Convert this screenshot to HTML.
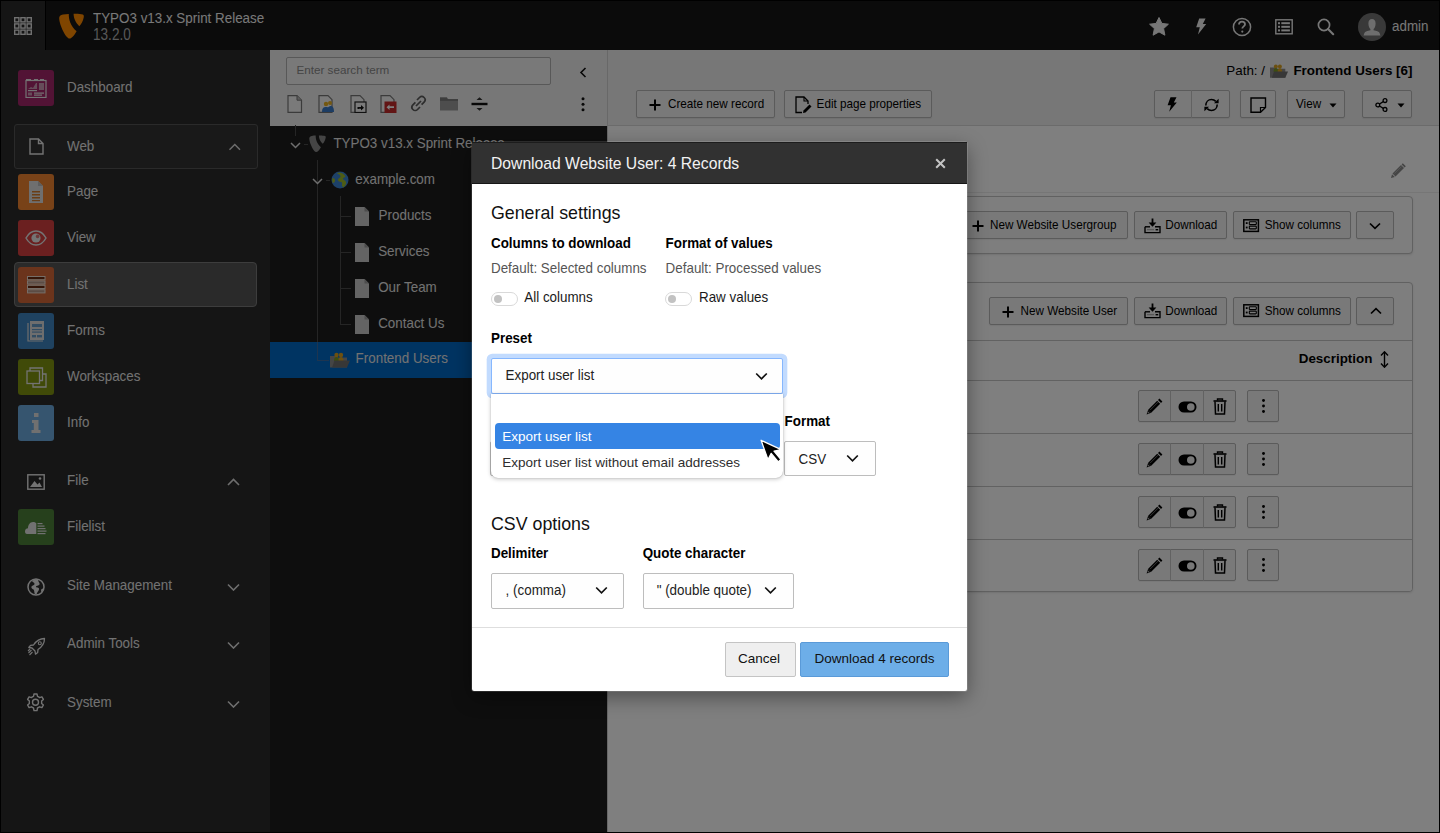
<!DOCTYPE html>
<html><head><meta charset="utf-8">
<style>
*{box-sizing:border-box;margin:0;padding:0}
html,body{width:1440px;height:833px;overflow:hidden;background:#000;font-family:"Liberation Sans",sans-serif;font-size:13.4px}
.a{position:absolute}
svg{display:block}
#page{position:absolute;left:0;top:0;width:1440px;height:833px;overflow:hidden;background:#000}
/* topbar */
#top{left:1px;top:1px;width:1438px;height:49px;background:#161616}
#grid{left:0;top:0;width:45px;height:49px;background:#2a2a2a;border-right:1px solid #000}
.tt{color:#f2f2f2;font-size:13.4px;line-height:15px;white-space:nowrap}
/* sidebar */
#side{left:1px;top:50px;width:269px;height:782px;background:#2a2a2a}
.mi{position:absolute;left:17px;height:36px;width:36px;border-radius:3px}
.ml{position:absolute;left:66px;color:#e4e4e4;font-size:13.4px;line-height:16px;white-space:nowrap}
.chev{position:absolute;left:226px}
/* tree */
#tree{left:270px;top:50px;width:337px;height:782px;background:#1d1d1d}
#ttool{left:0;top:0;width:337px;height:75.5px;background:#eeeeee}
.tl{position:absolute;color:#e4e4e4;font-size:13.4px;line-height:16px;white-space:nowrap}
.vl{position:absolute;width:1px;background:#4a4a4a}
.hl{position:absolute;height:1px;background:#4a4a4a}
/* content */
#content{left:607px;top:50px;width:832px;height:782px;background:#fefefe}
#dochead{left:0;top:0;width:832px;height:76px;background:#eeeeee;border-bottom:1px solid #d6d6d6}
.btn{position:absolute;height:28px;border:1px solid #b6b6b6;background:#f3f3f3;box-shadow:0 1px 1px rgba(0,0,0,.06);border-radius:2px;color:#000;font-size:11.7px;line-height:26px;white-space:nowrap}
.btn svg{position:absolute}
.btn span{position:absolute;top:0}
.panel{position:absolute;border:1px solid #c2c2c2;border-radius:4px;background:#fcfcfc;box-shadow:0 1px 2px rgba(0,0,0,.1)}
#overlay{left:0;top:0;width:1440px;height:833px;background:rgba(0,0,0,.5)}
/* modal */
#modal{left:472px;top:142px;width:495px;height:549px;background:#fff;outline:1px solid rgba(255,255,255,.13);border-radius:2px;box-shadow:0 6px 20px rgba(0,0,0,.4)}
#mh{left:0;top:0;width:495px;height:42px;background:#313131;color:#fff}
.lbl{position:absolute;font-weight:bold;font-size:13.4px;line-height:16px;color:#000;white-space:nowrap}
.txt{position:absolute;font-size:13.4px;line-height:16px;color:#555;white-space:nowrap}
.sel{position:absolute;border:1px solid #bdbdbd;border-radius:2px;background:#fefefe;color:#222;font-size:13.4px;white-space:nowrap}
.sel span{position:absolute}
.sel svg{position:absolute}
.tog{position:absolute;width:27px;height:14px;border:1px solid #d9d9d9;border-radius:7px;background:#fff}
.tog:after{content:"";position:absolute;left:2px;top:2px;width:8px;height:8px;border-radius:50%;background:#c2c2c2}
.ml,.tl,.lbl,.txt{transform:scaleY(1.09);transform-origin:0 12.6px}
.tt{transform:scaleY(1.16);transform-origin:0 12.1px}
.btn span{transform:scaleY(1.1);transform-origin:0 17.5px}
.sel span{transform:scaleY(1.08);transform-origin:0 12.6px}
</style></head>
<body>
<div id="page">
<div id="top" class="a">
  <div id="grid" class="a">
    <svg class="a" style="left:13px;top:16px" width="18" height="18" viewBox="0 0 18 18">
      <g fill="none" stroke="#e0e0e0" stroke-width="1.4">
        <rect x="0.7" y="0.7" width="4.2" height="4.2"/><rect x="6.9" y="0.7" width="4.2" height="4.2"/><rect x="13.1" y="0.7" width="4.2" height="4.2"/>
        <rect x="0.7" y="6.9" width="4.2" height="4.2"/><rect x="6.9" y="6.9" width="4.2" height="4.2"/><rect x="13.1" y="6.9" width="4.2" height="4.2"/>
        <rect x="0.7" y="13.1" width="4.2" height="4.2"/><rect x="6.9" y="13.1" width="4.2" height="4.2"/><rect x="13.1" y="13.1" width="4.2" height="4.2"/>
      </g>
    </svg>
  </div>
  <svg class="a" style="left:57px;top:12px" width="27" height="27" viewBox="0 0 27 27">
    <path fill="#ff8a00" d="M1.2,5.5 C1,3.2 2.5,1.8 5,1.4 C7,1.1 9,0.9 10.8,0.9 C10.6,6 12.3,12.5 18.6,18.3 C16.2,22.5 13.6,25.5 11.6,25.6 C8.2,25.8 1.6,12.8 1.2,5.5 Z"/>
    <path fill="#ff8a00" d="M15.6,0.8 C18.5,0.6 22.5,0.8 24.8,1.6 C25.9,2 26.1,3.2 25.6,5 C25,8 23.3,11.5 21.3,13.2 C17.8,10 15.5,5 15.6,0.8 Z"/>
  </svg>
  <div class="a tt" style="left:92px;top:10px">TYPO3 v13.x Sprint Release</div>
  <div class="a tt" style="left:92px;top:26.5px;color:#b0b0b0;font-size:13.6px">13.2.0</div>
  <!-- right icons -->
  <svg class="a" style="left:1148px;top:15.5px" width="20" height="19" viewBox="0 0 20 19"><path fill="#eeeeee" d="M10,0.5 L12.9,6.4 L19.4,7.2 L14.6,11.6 L15.9,18.2 L10,14.9 L4.1,18.2 L5.4,11.6 L0.6,7.2 L7.1,6.4 Z" stroke="#eeeeee" stroke-width="1" stroke-linejoin="round"/></svg>
  <svg class="a" style="left:1194px;top:17px" width="12" height="17" viewBox="0 0 12 17"><path fill="#eeeeee" d="M4.2,0.5 L10.6,0.5 L7.8,6 L11.2,6 L3,16.6 L4.8,9.2 L1.2,9.2 Z"/></svg>
  <svg class="a" style="left:1231px;top:15.5px" width="20" height="20" viewBox="0 0 20 20"><circle cx="10" cy="10" r="8.6" fill="none" stroke="#eeeeee" stroke-width="1.5"/><path d="M7,7.6 C7,5.6 8.4,4.6 10,4.6 C11.7,4.6 13,5.7 13,7.2 C13,9.3 10.3,9.4 10.3,11.6" fill="none" stroke="#eeeeee" stroke-width="1.8"/><circle cx="10.3" cy="14.6" r="1.1" fill="#eeeeee"/></svg>
  <svg class="a" style="left:1274px;top:17.5px" width="18" height="16" viewBox="0 0 18 16"><rect x="0.8" y="0.8" width="16.4" height="14" fill="none" stroke="#eeeeee" stroke-width="1.4"/><g fill="#eeeeee"><rect x="3" y="3.2" width="2" height="2"/><rect x="3" y="6.8" width="2" height="2"/><rect x="3" y="10.4" width="2" height="2"/><rect x="6.3" y="3.2" width="8.6" height="2"/><rect x="6.3" y="6.8" width="8.6" height="2"/><rect x="6.3" y="10.4" width="8.6" height="2"/></g></svg>
  <svg class="a" style="left:1316px;top:16.5px" width="18" height="18" viewBox="0 0 18 18"><circle cx="7" cy="7" r="5.6" fill="none" stroke="#eeeeee" stroke-width="1.7"/><path d="M11,11 L16.2,16.2" stroke="#eeeeee" stroke-width="2.1" stroke-linecap="round"/></svg>
  <div class="a" style="left:1356.5px;top:11.5px;width:28px;height:28px;border-radius:50%;background:#737373;overflow:hidden">
    <svg class="a" style="left:0;top:0" width="28" height="28" viewBox="0 0 28 28"><path fill="#dcdcdc" d="M14,6 C16.3,6 17.6,7.8 17.6,10.4 C17.6,13 16.6,15 15.6,16 L15.6,17.3 C18.3,17.8 21,18.6 21.6,20 L22.4,22.6 L5.6,22.6 L6.4,20 C7,18.6 9.7,17.8 12.4,17.3 L12.4,16 C11.4,15 10.4,13 10.4,10.4 C10.4,7.8 11.7,6 14,6 Z"/></svg>
  </div>
  <div class="a tt" style="left:1391px;top:18px;color:#eeeeee">admin</div>
</div>
<div id="side" class="a">
  <!-- Dashboard -->
  <div class="mi" style="top:20px;background:#a4266a">
    <svg class="a" style="left:7px;top:8px" width="22" height="20" viewBox="0 0 22 20"><g fill="none" stroke="#e8e8e8" stroke-width="1.2"><rect x="1" y="2.5" width="20" height="17"/></g><g fill="#e8e8e8"><rect x="1" y="1" width="5" height="1.2"/><rect x="9" y="1" width="4" height="1.2"/><rect x="15" y="1" width="4" height="1.2"/><rect x="3" y="12" width="9" height="1.2"/><path d="M3,11 L6,9 L8,10 L11,5 L12,5 L12,11 Z" opacity=".6"/><rect x="14" y="5" width="5" height="7" opacity=".6"/><rect x="3" y="14.5" width="4" height="3" opacity=".6"/><rect x="9" y="14.5" width="10" height="1.2"/><rect x="9" y="16.5" width="8" height="1.2"/></g></svg>
  </div>
  <div class="ml" style="top:29.9px">Dashboard</div>
  <!-- Web group -->
  <div class="a" style="left:13px;top:74px;width:243.5px;height:45px;border:1.2px solid #545454;border-radius:3px;background:#333333"></div>
  <svg class="a" style="left:28px;top:87.5px" width="15" height="17" viewBox="0 0 15 17"><path d="M1,1 L9.5,1 L14,5.5 L14,16 L1,16 Z M9.5,1 L9.5,5.5 L14,5.5" fill="none" stroke="#e6e6e6" stroke-width="1.4" stroke-linejoin="miter"/></svg>
  <div class="ml" style="top:88.8px">Web</div>
  <svg class="chev" style="top:93px;left:227px" width="13" height="8" viewBox="0 0 13 8"><path d="M1.5,6.8 L6.8,1.5 L12,6.8" fill="none" stroke="#dddddd" stroke-width="1.4"/></svg>
  <!-- Page -->
  <div class="mi" style="top:124.2px;background:#f08430">
    <svg class="a" style="left:11px;top:7px" width="14" height="22" viewBox="0 0 14 22"><path d="M0,0 L9,0 L14,5 L14,22 L0,22 Z" fill="#dedede"/><path d="M9,0 L9,5 L14,5 Z" fill="#bdbdbd"/><g fill="#d47a2a"><rect x="3" y="10" width="8" height="1.5"/><rect x="3" y="13" width="8" height="1.5"/><rect x="3" y="16" width="8" height="1.5"/><rect x="3" y="19" width="8" height="1.2"/></g></svg>
  </div>
  <div class="ml" style="top:134.1px">Page</div>
  <!-- View -->
  <div class="mi" style="top:170.4px;background:#d64040">
    <svg class="a" style="left:7px;top:10px" width="22" height="16" viewBox="0 0 22 16"><path d="M1,8 C4,2.5 8,1 11,1 C14,1 18,2.5 21,8 C18,13.5 14,15 11,15 C8,15 4,13.5 1,8 Z" fill="none" stroke="#e8e8e8" stroke-width="1.5"/><circle cx="11" cy="8" r="4.6" fill="#e8e8e8"/><circle cx="12.6" cy="6.4" r="1.8" fill="#d64040" opacity=".7"/></svg>
  </div>
  <div class="ml" style="top:180.3px">View</div>
  <!-- List (active) -->
  <div class="a" style="left:12.8px;top:212px;width:243.5px;height:45px;border:1.2px solid #7a7a7a;border-radius:4px;background:#545454"></div>
  <div class="mi" style="top:216.6px;background:#d66838">
    <svg class="a" style="left:9px;top:9.5px" width="19" height="18" viewBox="0 0 19 18"><g stroke="#ecdcd0" stroke-width="1"><rect x="0.5" y="0.5" width="17.5" height="3.2" fill="#6a2a10"/><rect x="0.5" y="4.9" width="17.5" height="3.2" fill="#b89888"/><rect x="0.5" y="9.3" width="17.5" height="3.2" fill="#6a2a10"/><rect x="0.5" y="13.7" width="17.5" height="3.2" fill="#b89888"/></g></svg>
  </div>
  <div class="ml" style="top:226.5px">List</div>
  <!-- Forms -->
  <div class="mi" style="top:262.8px;background:#3e84c0">
    <svg class="a" style="left:7px;top:7px" width="22" height="22" viewBox="0 0 22 22"><path d="M3,3 L3,21 L18,21" fill="none" stroke="#dcdcdc" stroke-width="1.2"/><rect x="5" y="1" width="14" height="19" fill="#dcdcdc"/><g fill="#3e84c0" opacity=".75"><rect x="7" y="4" width="10" height="3"/><rect x="7" y="9" width="10" height="1.2"/><rect x="7" y="11.5" width="10" height="1.2"/><rect x="7" y="15" width="4" height="2.4"/><rect x="12" y="15" width="5" height="2.4"/></g></svg>
  </div>
  <div class="ml" style="top:272.7px">Forms</div>
  <!-- Workspaces -->
  <div class="mi" style="top:309px;background:#809410">
    <svg class="a" style="left:8px;top:8px" width="21" height="21" viewBox="0 0 21 21"><g fill="none" stroke="#e6e6e6" stroke-width="1.3"><rect x="1" y="4" width="12.5" height="12.5"/><path d="M4,4 L4,1 L16.5,1 L16.5,13.5 L13.5,13.5"/><path d="M7,16.5 L7,20 L20,20 L20,7 L16.5,7"/></g></svg>
  </div>
  <div class="ml" style="top:318.9px">Workspaces</div>
  <!-- Info -->
  <div class="mi" style="top:355.2px;background:#6caade">
    <svg class="a" style="left:12px;top:7px" width="12" height="22" viewBox="0 0 12 22"><g fill="#e0e0e0"><rect x="4" y="1" width="4.5" height="4"/><path d="M2,8 L8.5,8 L8.5,18 L10.5,18 L10.5,21 L1.5,21 L1.5,18 L3.8,18 L3.8,11 L2,11 Z"/></g></svg>
  </div>
  <div class="ml" style="top:365.1px">Info</div>
  <!-- File group -->
  <svg class="a" style="left:26px;top:424px" width="18" height="16" viewBox="0 0 18 16"><rect x="0.8" y="0.8" width="16.4" height="14.4" fill="none" stroke="#e6e6e6" stroke-width="1.4"/><path d="M3,13 L7.5,7 L10.5,10.5 L12.5,8.5 L15,13 Z" fill="#e6e6e6"/><circle cx="13" cy="4.5" r="1.3" fill="#e6e6e6"/></svg>
  <div class="ml" style="top:423.4px">File</div>
  <svg class="chev" style="top:428px" width="13" height="8" viewBox="0 0 13 8"><path d="M1,7 L6.5,1.5 L12,7" fill="none" stroke="#dddddd" stroke-width="1.6"/></svg>
  <!-- Filelist -->
  <div class="mi" style="top:459.4px;background:#4c8038">
    <svg class="a" style="left:7px;top:10px" width="22" height="16" viewBox="0 0 22 16"><path d="M2,15 C0.5,15 0,13.5 0,12.5 C0,10.5 1.5,9.3 3,9.3 C3,6 5,3 8,3 C9.3,3 10.5,3.5 11.3,4.2 L11.3,15 Z" fill="#e2e2e2"/><path d="M11.3,4.2 C9.5,2 8,1 8,1" fill="none"/><g fill="#e2e2e2"><rect x="12.5" y="4" width="5" height="1.2"/><rect x="12.5" y="6.5" width="7" height="1.2"/><rect x="12.5" y="9" width="8" height="1.2"/><rect x="12.5" y="11.5" width="9" height="1.2"/><rect x="12.5" y="14" width="8" height="1.2"/></g></svg>
  </div>
  <div class="ml" style="top:469.3px">Filelist</div>
  <!-- Site Management -->
  <svg class="a" style="left:25.6px;top:527.5px" width="18" height="18" viewBox="0 0 18 18"><circle cx="9" cy="9" r="8" fill="none" stroke="#e6e6e6" stroke-width="1.5"/><path d="M5,3 C6,4.5 7.5,4.5 7.5,6 C7.5,7.5 5.5,7 4.5,8.5 C3.8,9.6 5.2,11 6.5,11.5 C7.5,12 7,14 7.8,16 L9.5,16.5 C10,14.5 11.5,13 12,11.5 C12.5,10 11,9.5 10,9.5 C9,9.5 8.5,8.5 9.5,8 C10.5,7.5 12,7.5 12.5,6.5 C13,5.5 12,4.5 11.5,3.5 L11,1.3 C9,1 6.5,1.5 5,3 Z M14,12 C14.5,11 15.5,10.5 16.5,10.5 C16.2,12 15.5,13.5 14.5,14.5 Z" fill="#e6e6e6"/></svg>
  <div class="ml" style="top:528.4px">Site Management</div>
  <svg class="chev" style="top:533px" width="13" height="8" viewBox="0 0 13 8"><path d="M1,1.5 L6.5,7 L12,1.5" fill="none" stroke="#dddddd" stroke-width="1.6"/></svg>
  <!-- Admin Tools -->
  <svg class="a" style="left:25.6px;top:586.5px" width="19" height="19" viewBox="0 0 19 19"><path d="M17.5,1.5 C13,1.5 9.5,3.5 6.5,8 L3.5,8.3 L1.8,10.5 L5,11 L8,14 L8.5,17.2 L10.7,15.5 L11,12.5 C15.5,9.5 17.5,6 17.5,1.5 Z" fill="none" stroke="#e6e6e6" stroke-width="1.3" stroke-linejoin="round"/><circle cx="12.8" cy="6.2" r="1.5" fill="none" stroke="#e6e6e6" stroke-width="1.1"/><path d="M4.5,13 L1.5,16 M5.5,15 L2.5,18 M3,12 L1,14" stroke="#e6e6e6" stroke-width="1.1"/></svg>
  <div class="ml" style="top:586.4px">Admin Tools</div>
  <svg class="chev" style="top:591px" width="13" height="8" viewBox="0 0 13 8"><path d="M1,1.5 L6.5,7 L12,1.5" fill="none" stroke="#dddddd" stroke-width="1.6"/></svg>
  <!-- System -->
  <svg class="a" style="left:25.1px;top:643px" width="19" height="19" viewBox="0 0 19 19"><path d="M8,1 L11,1 L11.5,3.4 C12.3,3.7 13,4.1 13.6,4.6 L15.9,3.8 L17.4,6.4 L15.6,8 C15.7,8.8 15.7,9.6 15.6,10.4 L17.4,12 L15.9,14.6 L13.6,13.8 C13,14.3 12.3,14.7 11.5,15 L11,17.6 L8,17.6 L7.5,15 C6.7,14.7 6,14.3 5.4,13.8 L3.1,14.6 L1.6,12 L3.4,10.4 C3.3,9.6 3.3,8.8 3.4,8 L1.6,6.4 L3.1,3.8 L5.4,4.6 C6,4.1 6.7,3.7 7.5,3.4 Z" fill="none" stroke="#e6e6e6" stroke-width="1.4" stroke-linejoin="round"/><circle cx="9.5" cy="9.3" r="3" fill="none" stroke="#e6e6e6" stroke-width="1.4"/></svg>
  <div class="ml" style="top:645.4px">System</div>
  <svg class="chev" style="top:650px" width="13" height="8" viewBox="0 0 13 8"><path d="M1,1.5 L6.5,7 L12,1.5" fill="none" stroke="#dddddd" stroke-width="1.6"/></svg>
</div>
<div id="tree" class="a">
  <div id="ttool" class="a">
    <div class="a" style="left:16px;top:6.5px;width:265px;height:28.5px;border:1px solid #b0b0b0;border-radius:2px;background:#f2f2f2"></div>
    <div class="a" style="left:26.4px;top:13px;font-size:11.7px;line-height:14px;color:#8a8a8a;white-space:nowrap">Enter search term</div>
    <svg class="a" style="left:308.5px;top:17px" width="8" height="11" viewBox="0 0 8 11"><path d="M6.5,1 L2,5.5 L6.5,10" fill="none" stroke="#111" stroke-width="1.6"/></svg>
    <!-- icons -->
    <svg class="a" style="left:17px;top:45px" width="16" height="18" viewBox="0 0 16 18"><path d="M1,0.7 L10,0.7 L14.5,5.2 L14.5,17.3 L1,17.3 Z" fill="#f4f4f4" stroke="#777" stroke-width="1.2"/><path d="M10,0.7 L10,5.2 L14.5,5.2" fill="#bbb" stroke="#777" stroke-width="1"/></svg>
    <svg class="a" style="left:48px;top:45px" width="17" height="18" viewBox="0 0 17 18"><path d="M1,0.7 L10,0.7 L14,4.7 L14,17.3 L1,17.3 Z" fill="#f4f4f4" stroke="#777" stroke-width="1.2"/><circle cx="8" cy="9" r="2.2" fill="#e8b020"/><circle cx="12" cy="8" r="2" fill="#e8b020"/><path d="M4,17 C4,13 5.5,12 8,12 C10.5,12 12,13 12,17 Z" fill="#3a7ac8"/><path d="M9,17 C9,13 10.5,11 12.5,11 C14.5,11 16,12.5 16,17 Z" fill="#3a7ac8"/></svg>
    <svg class="a" style="left:80px;top:45px" width="17" height="18" viewBox="0 0 17 18"><path d="M1,0.7 L10,0.7 L14,4.7 L14,17.3 L1,17.3 Z" fill="#f4f4f4" stroke="#777" stroke-width="1.2"/><rect x="5" y="7" width="11" height="10.5" fill="#f4f4f4" stroke="#222" stroke-width="1.2"/><path d="M7.5,14 L7.5,12 L11,12 L11,10 L14,12.8 L11,15.6 L11,13.8 L9,13.8 L9,14 Z" fill="#111"/></svg>
    <svg class="a" style="left:110px;top:45px" width="17" height="18" viewBox="0 0 17 18"><path d="M1,0.7 L10,0.7 L14,4.7 L14,17.3 L1,17.3 Z" fill="#f4f4f4" stroke="#777" stroke-width="1.2"/><rect x="4.5" y="6.5" width="12" height="11.5" fill="#c42a2a"/><path d="M6.5,12.2 L9.5,9.5 L9.5,11.3 L14,11.3 L14,13.1 L9.5,13.1 L9.5,14.9 Z" fill="#fff"/></svg>
    <svg class="a" style="left:140px;top:45px" width="17" height="17" viewBox="0 0 17 17"><g fill="none" stroke="#5a5a5a" stroke-width="1.7"><path d="M7,5 L9.5,2.5 C10.8,1.2 12.8,1.2 14.1,2.5 C15.4,3.8 15.4,5.8 14.1,7.1 L11.6,9.6"/><path d="M10,12 L7.5,14.5 C6.2,15.8 4.2,15.8 2.9,14.5 C1.6,13.2 1.6,11.2 2.9,9.9 L5.4,7.4"/><path d="M6,11 L11,6"/></g></svg>
    <svg class="a" style="left:170px;top:46.5px" width="18" height="14" viewBox="0 0 18 14"><path d="M0,0.5 L7,0.5 L8.5,2.3 L18,2.3 L18,13.5 L0,13.5 Z" fill="#9a9a9a"/><rect x="0" y="2.3" width="18" height="1.3" fill="#6a6a6a"/><rect x="0" y="0.5" width="7" height="2" fill="#7a7a7a"/></svg>
    <svg class="a" style="left:201px;top:47px" width="17" height="14" viewBox="0 0 17 14"><path d="M5.5,3 L8.5,0.2 L11.5,3 Z M5.5,11 L8.5,13.8 L11.5,11 Z" fill="#333"/><rect x="0.5" y="5.8" width="16" height="2.4" fill="#111"/></svg>
    <svg class="a" style="left:310.8px;top:46.8px" width="4" height="15" viewBox="0 0 4 15"><circle cx="2" cy="1.8" r="1.5" fill="#111"/><circle cx="2" cy="7.3" r="1.5" fill="#111"/><circle cx="2" cy="12.8" r="1.5" fill="#111"/></svg>
  </div>
  <div class="a" style="left:336.5px;top:0;width:1px;height:782px;background:#8a8a8a"></div>
  <!-- tree lines -->
  <div class="vl" style="left:25px;top:75px;height:11px"></div>
  <div class="hl" style="left:34px;top:94px;width:4px"></div>
  <div class="vl" style="left:47px;top:110px;height:201px"></div>
  <div class="hl" style="left:56px;top:130px;width:4px"></div>
  <div class="vl" style="left:70px;top:146px;height:129px"></div>
  <div class="hl" style="left:70px;top:166px;width:11px"></div>
  <div class="hl" style="left:70px;top:202px;width:11px"></div>
  <div class="hl" style="left:70px;top:238px;width:11px"></div>
  <div class="hl" style="left:70px;top:274px;width:11px"></div>
  <!-- highlight -->
  <div class="a" style="left:0;top:291.6px;width:336.5px;height:36px;background:#0068c4"></div>
  <div class="hl" style="left:47px;top:310px;width:12px;background:#3d6aa0"></div>
  <div class="vl" style="left:47px;top:291.6px;height:19px;background:#3d6aa0"></div>
  <!-- row 1 -->
  <svg class="a" style="left:19.5px;top:91.5px" width="11" height="7" viewBox="0 0 11 7"><path d="M1,1 L5.5,5.5 L10,1" fill="none" stroke="#dddddd" stroke-width="1.5"/></svg>
  <svg class="a" style="left:38px;top:85px" width="19" height="18" viewBox="0 0 27 27">
    <path fill="#8a8a8a" d="M1.2,5.5 C1,3.2 2.5,1.8 5,1.4 C7,1.1 9,0.9 10.8,0.9 C10.6,6 12.3,12.5 18.6,18.3 C16.2,22.5 13.6,25.5 11.6,25.6 C8.2,25.8 1.6,12.8 1.2,5.5 Z"/>
    <path fill="#8a8a8a" d="M15.6,0.8 C18.5,0.6 22.5,0.8 24.8,1.6 C25.9,2 26.1,3.2 25.6,5 C25,8 23.3,11.5 21.3,13.2 C17.8,10 15.5,5 15.6,0.8 Z"/>
  </svg>
  <div class="tl" style="left:63.4px;top:86px">TYPO3 v13.x Sprint Release</div>
  <!-- row 2 -->
  <svg class="a" style="left:41.5px;top:127.5px" width="11" height="7" viewBox="0 0 11 7"><path d="M1,1 L5.5,5.5 L10,1" fill="none" stroke="#dddddd" stroke-width="1.5"/></svg>
  <svg class="a" style="left:61px;top:121px" width="18" height="18" viewBox="0 0 18 18"><circle cx="9" cy="9" r="8.5" fill="#3b82d0"/><path d="M6,2.2 C7.5,3.5 9,3.5 9.5,5 C10,6.5 7.5,7 7,8.5 C6.5,10 8.5,11 10,11 C11.5,11 11,13 11,15 L12.5,16.5 C14.5,14.5 15.5,12.5 15,11 C14.5,9.5 12.5,9 12,8 C11.5,7 13.5,6.5 14.5,5.5 C13,3 10.5,1.5 8,1.5 Z M1.5,7 C3,7 4.5,8 4,10 C3.5,11.5 2.5,12 1.8,12 C1,10.5 1,8.5 1.5,7 Z" fill="#9ab82a"/></svg>
  <div class="tl" style="left:85.3px;top:122.2px">example.com</div>
  <!-- pages -->
  <svg class="a" style="left:85px;top:156.5px" width="14" height="19" viewBox="0 0 14 19"><path d="M0,0 L9.5,0 L14,4.5 L14,19 L0,19 Z" fill="#c8c8c8"/><path d="M9.5,0 L9.5,4.5 L14,4.5 Z" fill="#9a9a9a"/></svg>
  <div class="tl" style="left:108.6px;top:157.9px">Products</div>
  <svg class="a" style="left:85px;top:192.5px" width="14" height="19" viewBox="0 0 14 19"><path d="M0,0 L9.5,0 L14,4.5 L14,19 L0,19 Z" fill="#c8c8c8"/><path d="M9.5,0 L9.5,4.5 L14,4.5 Z" fill="#9a9a9a"/></svg>
  <div class="tl" style="left:108.2px;top:193.9px">Services</div>
  <svg class="a" style="left:85px;top:228.5px" width="14" height="19" viewBox="0 0 14 19"><path d="M0,0 L9.5,0 L14,4.5 L14,19 L0,19 Z" fill="#c8c8c8"/><path d="M9.5,0 L9.5,4.5 L14,4.5 Z" fill="#9a9a9a"/></svg>
  <div class="tl" style="left:108.2px;top:229.9px">Our Team</div>
  <svg class="a" style="left:85px;top:264.5px" width="14" height="19" viewBox="0 0 14 19"><path d="M0,0 L9.5,0 L14,4.5 L14,19 L0,19 Z" fill="#c8c8c8"/><path d="M9.5,0 L9.5,4.5 L14,4.5 Z" fill="#9a9a9a"/></svg>
  <div class="tl" style="left:108.2px;top:265.9px">Contact Us</div>
  <!-- Frontend Users -->
  <svg class="a" style="left:60px;top:301.5px" width="20" height="16" viewBox="0 0 20 16"><path d="M0,4 L7,4 L8,5.5 L17,5.5 L17,15.5 L0,15.5 Z" fill="#8a8a8a"/><circle cx="6.5" cy="3" r="2.2" fill="#d8a020"/><circle cx="11" cy="3" r="2.2" fill="#d8a020"/><path d="M4,9 C4,6 5,5 6.5,5 C8,5 9,6 9,9 Z" fill="#7a9a20"/><path d="M8.5,9 C8.5,6 9.5,5 11,5 C12.5,5 13.5,6 13.5,9 Z" fill="#d8a020"/><path d="M2,15.5 L4.5,8.5 L20,8.5 L17,15.5 Z" fill="#6e6e6e"/></svg>
  <div class="tl" style="left:85.6px;top:301.4px">Frontend Users</div>
</div>
<div id="content" class="a">
  <div id="dochead" class="a"></div>
  <div class="a" style="left:0;top:0;width:1px;height:782px;background:#d0d0d0"></div>
  <div class="btn" style="left:29px;top:40.4px;width:139px">
    <svg style="left:12px;top:8px" width="12" height="12" viewBox="0 0 12 12"><path d="M6,0.5 L6,11.5 M0.5,6 L11.5,6" stroke="#000" stroke-width="2"/></svg>
    <span style="left:31px">Create new record</span>
  </div>
  <div class="btn" style="left:177.3px;top:40.4px;width:148px">
    <svg style="left:10px;top:5px" width="17" height="18" viewBox="0 0 17 18"><path d="M7,16.5 L1,16.5 L1,1 L9,1 L13,5 L13,8" fill="none" stroke="#000" stroke-width="1.3"/><path d="M9,1 L9,5 L13,5" fill="none" stroke="#000" stroke-width="1.1"/><path d="M8,17 L8.5,14.5 L14.5,8.5 L16.5,10.5 L10.5,16.5 Z" fill="#000"/></svg>
    <span style="left:31.3px">Edit page properties</span>
  </div>
  <!-- right docheader buttons -->
  <div class="btn" style="left:547.2px;top:40.4px;width:75.4px"></div>
  <div class="a" style="left:584.2px;top:40.4px;width:1px;height:28px;background:#c4c4c4"></div>
  <svg class="a" style="left:560px;top:47px" width="10" height="15" viewBox="0 0 10 15"><path d="M3.5,0.3 L9.5,0.3 L6.8,5.4 L9.8,5.4 L2.2,14.8 L3.9,8.2 L0.6,8.2 Z" fill="#000"/></svg>
  <svg class="a" style="left:596px;top:46.5px" width="17" height="16" viewBox="0 0 17 16"><path d="M2.8,8.5 C2.8,5 5.3,2.5 8.5,2.5 C10.2,2.5 11.7,3.2 12.8,4.4" fill="none" stroke="#000" stroke-width="1.6"/><path d="M14.2,7.5 C14.2,11 11.7,13.5 8.5,13.5 C6.8,13.5 5.3,12.8 4.2,11.6" fill="none" stroke="#000" stroke-width="1.6"/><path d="M11,6.3 L15.6,6.3 L15.6,1.7 Z" fill="#000"/><path d="M6,9.7 L1.4,9.7 L1.4,14.3 Z" fill="#000"/></svg>
  <div class="btn" style="left:632.9px;top:40.4px;width:36.5px">
    <svg style="left:9px;top:5.5px" width="17" height="16" viewBox="0 0 17 16"><path d="M1,1 L15.5,1 L15.5,10.5 L10.5,15.2 L1,15.2 Z" fill="none" stroke="#000" stroke-width="1.4"/><path d="M15.5,10.5 L10.5,10.5 L10.5,15.2" fill="none" stroke="#000" stroke-width="1.2"/></svg>
  </div>
  <div class="btn" style="left:679.6px;top:40.4px;width:58px">
    <span style="left:8.4px">View</span>
    <svg style="left:41px;top:11.5px" width="8" height="5" viewBox="0 0 8 5"><path d="M0.5,0.5 L7.5,0.5 L4,4.5 Z" fill="#000"/></svg>
  </div>
  <div class="btn" style="left:754.7px;top:40.4px;width:50.7px">
    <svg style="left:12px;top:7px" width="13" height="14" viewBox="0 0 13 14"><g fill="none" stroke="#000" stroke-width="1.3"><circle cx="10" cy="2.6" r="1.9"/><circle cx="2.8" cy="7" r="1.9"/><circle cx="10" cy="11.4" r="1.9"/><path d="M4.5,6 L8.3,3.6 M4.5,8 L8.3,10.4"/></g></svg>
    <svg style="left:34px;top:11.5px" width="8" height="5" viewBox="0 0 8 5"><path d="M0.5,0.5 L7.5,0.5 L4,4.5 Z" fill="#000"/></svg>
  </div>
  <div class="a" style="left:619.3px;top:12.8px;font-size:13.4px;line-height:16px;color:#000;white-space:nowrap">Path: /</div>
  <svg class="a" style="left:663px;top:12.5px" width="18" height="16" viewBox="0 0 20 16"><path d="M0,4 L7,4 L8,5.5 L17,5.5 L17,15.5 L0,15.5 Z" fill="#8a8a8a"/><circle cx="6.5" cy="3" r="2.2" fill="#d8a020"/><circle cx="11" cy="3" r="2.2" fill="#d8a020"/><path d="M4,9 C4,6 5,5 6.5,5 C8,5 9,6 9,9 Z" fill="#7a9a20"/><path d="M8.5,9 C8.5,6 9.5,5 11,5 C12.5,5 13.5,6 13.5,9 Z" fill="#d8a020"/><path d="M2,15.5 L4.5,8.5 L20,8.5 L17,15.5 Z" fill="#6e6e6e"/></svg>
  <div class="a" style="left:686.4px;top:12.8px;font-size:13.4px;line-height:16px;color:#000;font-weight:bold;white-space:nowrap">Frontend Users [6]</div>
  <!-- pencil -->
  <svg class="a" style="left:783px;top:111.5px" width="17" height="17" viewBox="0 0 17 17"><path d="M12.8,1.2 L15.8,4.2 L14.6,5.4 L11.6,2.4 Z" fill="#8a8a8a"/><path d="M11,3 L14,6 L5.5,14.5 L2.5,11.5 Z" fill="#8a8a8a"/><path d="M2,12.2 L4.8,15 L1,16 Z" fill="#8a8a8a"/><path d="M4.5,11.5 L11.5,4.5" stroke="#b4b4b4" stroke-width="0.8"/></svg>
  <div class="a" style="left:29px;top:142px;width:803px;height:1px;background:#ececec"></div>
  <!-- panel 1 -->
  <div class="panel" style="left:29px;top:146.4px;width:776.5px;height:57.6px"></div>
  <div class="btn" style="left:351.7px;top:161px;width:169px">
    <svg style="left:12px;top:8px" width="12" height="12" viewBox="0 0 12 12"><path d="M6,0.5 L6,11.5 M0.5,6 L11.5,6" stroke="#000" stroke-width="2"/></svg>
    <span style="left:30.3px">New Website Usergroup</span>
  </div>
  <div class="btn dl" style="left:526.5px;top:161px;width:93px">
    <svg style="left:9.4px;top:5.5px" width="17" height="16" viewBox="0 0 17 16"><path d="M8.5,0.5 L8.5,7" stroke="#000" stroke-width="1.8"/><path d="M4.6,4.6 L8.5,8.8 L12.4,4.6 Z" fill="#000"/><path d="M1,8.8 L1,14.6 L16,14.6 L16,8.8 L11,8.8" fill="none" stroke="#000" stroke-width="1.4"/><path d="M1,8.8 L6,8.8" stroke="#000" stroke-width="1.4"/><rect x="11.6" y="11" width="2.6" height="1.4" fill="#000"/><rect x="3" y="11.2" width="7" height="1" fill="#000" opacity=".35"/></svg>
    <span style="left:30.8px">Download</span>
  </div>
  <div class="btn" style="left:625.5px;top:161px;width:118px">
    <svg style="left:9.6px;top:6.6px" width="17" height="14" viewBox="0 0 17 14"><rect x="0.8" y="0.8" width="14.6" height="11.6" fill="none" stroke="#000" stroke-width="1.5"/><g fill="#000"><rect x="2.8" y="3.2" width="1.8" height="1.8"/><rect x="2.8" y="7.6" width="1.8" height="1.8"/></g><g fill="none" stroke="#000" stroke-width="1.1"><rect x="6.3" y="2.7" width="7" height="2.8" rx=".6"/><rect x="6.3" y="7.1" width="7" height="2.8" rx=".6"/></g></svg>
    <span style="left:31.3px">Show columns</span>
  </div>
  <div class="btn" style="left:749px;top:161px;width:37.5px">
    <svg style="left:11.8px;top:9.5px" width="12" height="8" viewBox="0 0 12 8"><path d="M1,1.5 L6,6.3 L11,1.5" fill="none" stroke="#000" stroke-width="1.7"/></svg>
  </div>
  <!-- panel 2 -->
  <div class="panel" style="left:29px;top:231.5px;width:776.5px;height:310px;overflow:hidden">
    <div class="a" style="left:0;top:57px;width:774.5px;height:1px;background:#c4c4c4"></div>
    <div class="a" style="left:0;top:58px;width:774.5px;height:39.5px;background:#fdfdfd"></div>
    <div class="a" style="left:0;top:97px;width:774.5px;height:1px;background:#c4c4c4"></div>
    <div class="a" style="left:0;top:98px;width:774.5px;height:211px;background:#fff"></div>
    <div class="a" style="left:0;top:150px;width:774.5px;height:1px;background:#c4c4c4"></div>
    <div class="a" style="left:0;top:203px;width:774.5px;height:1px;background:#c4c4c4"></div>
    <div class="a" style="left:0;top:256px;width:774.5px;height:1px;background:#c4c4c4"></div>
  </div>
  <div class="btn" style="left:381.6px;top:246.6px;width:139.1px">
    <svg style="left:12.3px;top:8px" width="12" height="12" viewBox="0 0 12 12"><path d="M6,0.5 L6,11.5 M0.5,6 L11.5,6" stroke="#000" stroke-width="2"/></svg>
    <span style="left:31px">New Website User</span>
  </div>
  <div class="btn" style="left:526.5px;top:246.6px;width:93px">
    <svg style="left:9.4px;top:5.5px" width="17" height="16" viewBox="0 0 17 16"><path d="M8.5,0.5 L8.5,7" stroke="#000" stroke-width="1.8"/><path d="M4.6,4.6 L8.5,8.8 L12.4,4.6 Z" fill="#000"/><path d="M1,8.8 L1,14.6 L16,14.6 L16,8.8 L11,8.8" fill="none" stroke="#000" stroke-width="1.4"/><path d="M1,8.8 L6,8.8" stroke="#000" stroke-width="1.4"/><rect x="11.6" y="11" width="2.6" height="1.4" fill="#000"/><rect x="3" y="11.2" width="7" height="1" fill="#000" opacity=".35"/></svg>
    <span style="left:30.8px">Download</span>
  </div>
  <div class="btn" style="left:625.5px;top:246.6px;width:118px">
    <svg style="left:9.6px;top:6.6px" width="17" height="14" viewBox="0 0 17 14"><rect x="0.8" y="0.8" width="14.6" height="11.6" fill="none" stroke="#000" stroke-width="1.5"/><g fill="#000"><rect x="2.8" y="3.2" width="1.8" height="1.8"/><rect x="2.8" y="7.6" width="1.8" height="1.8"/></g><g fill="none" stroke="#000" stroke-width="1.1"><rect x="6.3" y="2.7" width="7" height="2.8" rx=".6"/><rect x="6.3" y="7.1" width="7" height="2.8" rx=".6"/></g></svg>
    <span style="left:31.3px">Show columns</span>
  </div>
  <div class="btn" style="left:749px;top:246.6px;width:37.5px">
    <svg style="left:12.5px;top:9.5px" width="12" height="8" viewBox="0 0 12 8"><path d="M1,6.5 L6,1.7 L11,6.5" fill="none" stroke="#000" stroke-width="1.7"/></svg>
  </div>
  <div class="a" style="left:691.75px;top:301.1px;font-size:13.4px;line-height:16px;color:#000;font-weight:bold;white-space:nowrap">Description</div>
  <svg class="a" style="left:772.5px;top:300.5px" width="9" height="17" viewBox="0 0 9 17"><path d="M4.5,2 L4.5,15" stroke="#000" stroke-width="1.4"/><path d="M1,4.5 L4.5,0.8 L8,4.5 M1,12.5 L4.5,16.2 L8,12.5" fill="none" stroke="#000" stroke-width="1.4"/></svg>
  <div class="btn" style="left:530.6px;top:339.8px;width:98px;height:32.5px"></div>
  <div class="a" style="left:563.2px;top:339.8px;width:1px;height:32.5px;background:#c4c4c4"></div>
  <div class="a" style="left:596.3px;top:339.8px;width:1px;height:32.5px;background:#c4c4c4"></div>
  <svg class="a" style="left:538.5px;top:348.3px" width="17" height="17" viewBox="0 0 17 17"><path d="M13.4,0.6 L16.4,3.6 L15,5 L12,2 Z" fill="#000"/><path d="M11.2,2.8 L14.2,5.8 L5.2,14.8 L2.2,11.8 Z" fill="#000"/><path d="M4.2,12 L12.2,4" stroke="#8a8a8a" stroke-width=".8"/><path d="M2.2,11.8 L5.2,14.8 L0.6,16.4 Z" fill="#000"/><circle cx="2.4" cy="14.6" r=".9" fill="#9a9a9a"/></svg>
  <svg class="a" style="left:570.5px;top:350.6px" width="19" height="12" viewBox="0 0 19 12"><rect x="0.5" y="0.5" width="18" height="11" rx="5.5" fill="#000"/><circle cx="12.8" cy="6" r="3.8" fill="#f0f0f0"/></svg>
  <svg class="a" style="left:605.5px;top:348.1px" width="14" height="17" viewBox="0 0 14 17"><path d="M4.5,2.5 L4.5,1 L9.5,1 L9.5,2.5" fill="none" stroke="#000" stroke-width="1.4"/><path d="M0.5,3 L13.5,3" stroke="#000" stroke-width="1.6"/><path d="M2,3.5 L2.5,16 L11.5,16 L12,3.5" fill="none" stroke="#000" stroke-width="1.5"/><path d="M5.3,6 L5.3,13.5 M8.7,6 L8.7,13.5" stroke="#000" stroke-width="1.4"/></svg>
  <div class="btn" style="left:639.7px;top:339.8px;width:32.7px;height:32.5px"></div>
  <svg class="a" style="left:654.8px;top:349.3px" width="3" height="14" viewBox="0 0 3 14"><circle cx="1.5" cy="1.5" r="1.45" fill="#000"/><circle cx="1.5" cy="7" r="1.45" fill="#000"/><circle cx="1.5" cy="12.5" r="1.45" fill="#000"/></svg>
  <div class="btn" style="left:530.6px;top:392.9px;width:98px;height:32.5px"></div>
  <div class="a" style="left:563.2px;top:392.9px;width:1px;height:32.5px;background:#c4c4c4"></div>
  <div class="a" style="left:596.3px;top:392.9px;width:1px;height:32.5px;background:#c4c4c4"></div>
  <svg class="a" style="left:538.5px;top:401.4px" width="17" height="17" viewBox="0 0 17 17"><path d="M13.4,0.6 L16.4,3.6 L15,5 L12,2 Z" fill="#000"/><path d="M11.2,2.8 L14.2,5.8 L5.2,14.8 L2.2,11.8 Z" fill="#000"/><path d="M4.2,12 L12.2,4" stroke="#8a8a8a" stroke-width=".8"/><path d="M2.2,11.8 L5.2,14.8 L0.6,16.4 Z" fill="#000"/><circle cx="2.4" cy="14.6" r=".9" fill="#9a9a9a"/></svg>
  <svg class="a" style="left:570.5px;top:403.7px" width="19" height="12" viewBox="0 0 19 12"><rect x="0.5" y="0.5" width="18" height="11" rx="5.5" fill="#000"/><circle cx="12.8" cy="6" r="3.8" fill="#f0f0f0"/></svg>
  <svg class="a" style="left:605.5px;top:401.2px" width="14" height="17" viewBox="0 0 14 17"><path d="M4.5,2.5 L4.5,1 L9.5,1 L9.5,2.5" fill="none" stroke="#000" stroke-width="1.4"/><path d="M0.5,3 L13.5,3" stroke="#000" stroke-width="1.6"/><path d="M2,3.5 L2.5,16 L11.5,16 L12,3.5" fill="none" stroke="#000" stroke-width="1.5"/><path d="M5.3,6 L5.3,13.5 M8.7,6 L8.7,13.5" stroke="#000" stroke-width="1.4"/></svg>
  <div class="btn" style="left:639.7px;top:392.9px;width:32.7px;height:32.5px"></div>
  <svg class="a" style="left:654.8px;top:402.4px" width="3" height="14" viewBox="0 0 3 14"><circle cx="1.5" cy="1.5" r="1.45" fill="#000"/><circle cx="1.5" cy="7" r="1.45" fill="#000"/><circle cx="1.5" cy="12.5" r="1.45" fill="#000"/></svg>
  <div class="btn" style="left:530.6px;top:445.9px;width:98px;height:32.5px"></div>
  <div class="a" style="left:563.2px;top:445.9px;width:1px;height:32.5px;background:#c4c4c4"></div>
  <div class="a" style="left:596.3px;top:445.9px;width:1px;height:32.5px;background:#c4c4c4"></div>
  <svg class="a" style="left:538.5px;top:454.4px" width="17" height="17" viewBox="0 0 17 17"><path d="M13.4,0.6 L16.4,3.6 L15,5 L12,2 Z" fill="#000"/><path d="M11.2,2.8 L14.2,5.8 L5.2,14.8 L2.2,11.8 Z" fill="#000"/><path d="M4.2,12 L12.2,4" stroke="#8a8a8a" stroke-width=".8"/><path d="M2.2,11.8 L5.2,14.8 L0.6,16.4 Z" fill="#000"/><circle cx="2.4" cy="14.6" r=".9" fill="#9a9a9a"/></svg>
  <svg class="a" style="left:570.5px;top:456.7px" width="19" height="12" viewBox="0 0 19 12"><rect x="0.5" y="0.5" width="18" height="11" rx="5.5" fill="#000"/><circle cx="12.8" cy="6" r="3.8" fill="#f0f0f0"/></svg>
  <svg class="a" style="left:605.5px;top:454.2px" width="14" height="17" viewBox="0 0 14 17"><path d="M4.5,2.5 L4.5,1 L9.5,1 L9.5,2.5" fill="none" stroke="#000" stroke-width="1.4"/><path d="M0.5,3 L13.5,3" stroke="#000" stroke-width="1.6"/><path d="M2,3.5 L2.5,16 L11.5,16 L12,3.5" fill="none" stroke="#000" stroke-width="1.5"/><path d="M5.3,6 L5.3,13.5 M8.7,6 L8.7,13.5" stroke="#000" stroke-width="1.4"/></svg>
  <div class="btn" style="left:639.7px;top:445.9px;width:32.7px;height:32.5px"></div>
  <svg class="a" style="left:654.8px;top:455.4px" width="3" height="14" viewBox="0 0 3 14"><circle cx="1.5" cy="1.5" r="1.45" fill="#000"/><circle cx="1.5" cy="7" r="1.45" fill="#000"/><circle cx="1.5" cy="12.5" r="1.45" fill="#000"/></svg>
  <div class="btn" style="left:530.6px;top:498.9px;width:98px;height:32.5px"></div>
  <div class="a" style="left:563.2px;top:498.9px;width:1px;height:32.5px;background:#c4c4c4"></div>
  <div class="a" style="left:596.3px;top:498.9px;width:1px;height:32.5px;background:#c4c4c4"></div>
  <svg class="a" style="left:538.5px;top:507.4px" width="17" height="17" viewBox="0 0 17 17"><path d="M13.4,0.6 L16.4,3.6 L15,5 L12,2 Z" fill="#000"/><path d="M11.2,2.8 L14.2,5.8 L5.2,14.8 L2.2,11.8 Z" fill="#000"/><path d="M4.2,12 L12.2,4" stroke="#8a8a8a" stroke-width=".8"/><path d="M2.2,11.8 L5.2,14.8 L0.6,16.4 Z" fill="#000"/><circle cx="2.4" cy="14.6" r=".9" fill="#9a9a9a"/></svg>
  <svg class="a" style="left:570.5px;top:509.7px" width="19" height="12" viewBox="0 0 19 12"><rect x="0.5" y="0.5" width="18" height="11" rx="5.5" fill="#000"/><circle cx="12.8" cy="6" r="3.8" fill="#f0f0f0"/></svg>
  <svg class="a" style="left:605.5px;top:507.2px" width="14" height="17" viewBox="0 0 14 17"><path d="M4.5,2.5 L4.5,1 L9.5,1 L9.5,2.5" fill="none" stroke="#000" stroke-width="1.4"/><path d="M0.5,3 L13.5,3" stroke="#000" stroke-width="1.6"/><path d="M2,3.5 L2.5,16 L11.5,16 L12,3.5" fill="none" stroke="#000" stroke-width="1.5"/><path d="M5.3,6 L5.3,13.5 M8.7,6 L8.7,13.5" stroke="#000" stroke-width="1.4"/></svg>
  <div class="btn" style="left:639.7px;top:498.9px;width:32.7px;height:32.5px"></div>
  <svg class="a" style="left:654.8px;top:508.4px" width="3" height="14" viewBox="0 0 3 14"><circle cx="1.5" cy="1.5" r="1.45" fill="#000"/><circle cx="1.5" cy="7" r="1.45" fill="#000"/><circle cx="1.5" cy="12.5" r="1.45" fill="#000"/></svg>
</div>
<div id="overlay" class="a"></div>
<div id="modal" class="a">
  <div id="mh" class="a" style="border-top:1px solid #1c1c1c;border-bottom:1px solid #161616">
    <div class="a" style="left:19px;top:11.6px;font-size:15.7px;line-height:18px;color:#f2f2f2;white-space:nowrap">Download Website User: 4 Records</div>
    <svg class="a" style="left:463.4px;top:14.8px" width="11" height="11" viewBox="0 0 11 11"><path d="M1.2,1.2 L9.8,9.8 M9.8,1.2 L1.2,9.8" stroke="#c4c4c4" stroke-width="2"/></svg>
  </div>
  <div class="a" style="left:19px;top:61.2px;font-size:17.8px;line-height:20px;color:#111;white-space:nowrap">General settings</div>
  <div class="lbl" style="left:19px;top:94.45px">Columns to download</div>
  <div class="lbl" style="left:193.6px;top:94.45px">Format of values</div>
  <div class="txt" style="left:19px;top:118.85px">Default: Selected columns</div>
  <div class="txt" style="left:193.6px;top:118.85px">Default: Processed values</div>
  <div class="tog" style="left:18.7px;top:149.5px"></div>
  <div class="txt" style="left:52.3px;top:147.95px;color:#1a1a1a">All columns</div>
  <div class="tog" style="left:193.3px;top:149.5px"></div>
  <div class="txt" style="left:227px;top:147.95px;color:#1a1a1a">Raw values</div>
  <div class="lbl" style="left:19px;top:188.55px">Preset</div>
  <!-- preset select with focus -->
  <div class="sel" style="left:19px;top:216.3px;width:292.3px;height:36px;border-color:#86b7fe;box-shadow:0 0 0 4.3px rgba(13,110,253,.25)">
    <span style="left:13.6px;top:8.5px;line-height:16px">Export user list</span>
    <svg style="left:262.6px;top:13px" width="13" height="9" viewBox="0 0 13 9"><path d="M1.2,1.5 L6.5,6.8 L11.8,1.5" fill="none" stroke="#111" stroke-width="1.7"/></svg>
  </div>
  <!-- hidden input under dropdown -->
  <div class="sel" style="left:18px;top:299.4px;width:280px;height:35px"></div>
  <div class="lbl" style="left:312.6px;top:272.35px">Format</div>
  <div class="sel" style="left:312.2px;top:299.4px;width:91.6px;height:35px">
    <span style="left:13.4px;top:9.2px;line-height:16px">CSV</span>
    <svg style="left:61.3px;top:12px" width="13" height="9" viewBox="0 0 13 9"><path d="M1.2,1.5 L6.5,6.8 L11.8,1.5" fill="none" stroke="#111" stroke-width="1.7"/></svg>
  </div>
  <!-- dropdown -->
  <div class="a" style="left:19px;top:251.9px;width:291.7px;height:84.4px;background:#fff;border-radius:0 0 7px 7px;box-shadow:0 1px 4px rgba(0,0,0,.25),0 0 1px rgba(0,0,0,.3)">
    <div class="a" style="left:4.1px;top:29.3px;width:284.5px;height:25.6px;background:#3584e4;border-radius:4px"></div>
    <div class="a" style="left:11.2px;top:35.3px;font-size:13.5px;line-height:16px;color:#fff;white-space:nowrap">Export user list</div>
    <div class="a" style="left:11.2px;top:61.2px;font-size:13.5px;line-height:16px;color:#2e2e2e;white-space:nowrap">Export user list without email addresses</div>
  </div>
  <div class="a" style="left:19px;top:371.8px;font-size:17.8px;line-height:20px;color:#111;white-space:nowrap">CSV options</div>
  <div class="lbl" style="left:19px;top:403.75px">Delimiter</div>
  <div class="lbl" style="left:170.7px;top:403.75px">Quote character</div>
  <div class="sel" style="left:19px;top:431.3px;width:132.6px;height:35.8px">
    <span style="left:13.6px;top:9.2px;line-height:16px">, (comma)</span>
    <svg style="left:102.5px;top:12px" width="13" height="9" viewBox="0 0 13 9"><path d="M1.2,1.5 L6.5,6.8 L11.8,1.5" fill="none" stroke="#111" stroke-width="1.7"/></svg>
  </div>
  <div class="sel" style="left:170.7px;top:431.3px;width:151px;height:35.8px">
    <span style="left:13px;top:9.2px;line-height:16px">" (double quote)</span>
    <svg style="left:120.5px;top:12px" width="13" height="9" viewBox="0 0 13 9"><path d="M1.2,1.5 L6.5,6.8 L11.8,1.5" fill="none" stroke="#111" stroke-width="1.7"/></svg>
  </div>
  <div class="a" style="left:0;top:484.8px;width:495px;height:1px;background:#dedede"></div>
  <div class="a" style="left:252.5px;top:499.9px;width:71px;height:35.3px;background:#efefef;border:1px solid #c4c4c4;border-radius:2px"></div>
  <div class="a" style="left:266px;top:508.5px;font-size:13.5px;line-height:16px;color:#111;white-space:nowrap">Cancel</div>
  <div class="a" style="left:328px;top:499.9px;width:149px;height:35.3px;background:#6daee8;border:1px solid #5a9ad8;border-radius:2px"></div>
  <div class="a" style="left:342.5px;top:508.5px;font-size:13.5px;line-height:16px;color:#111;white-space:nowrap">Download 4 records</div>
  <!-- cursor -->
  <svg class="a" style="left:287px;top:296px" width="26" height="27" viewBox="0 0 26 27"><path d="M2.1,2.3 L9,21.6 L12.2,15.4 L19.3,23.8 L22,21.6 L15,13.2 L22.2,11.6 Z" fill="#000" stroke="#fff" stroke-width="1.3" stroke-linejoin="round"/></svg>
</div>
</div>
</body></html>
